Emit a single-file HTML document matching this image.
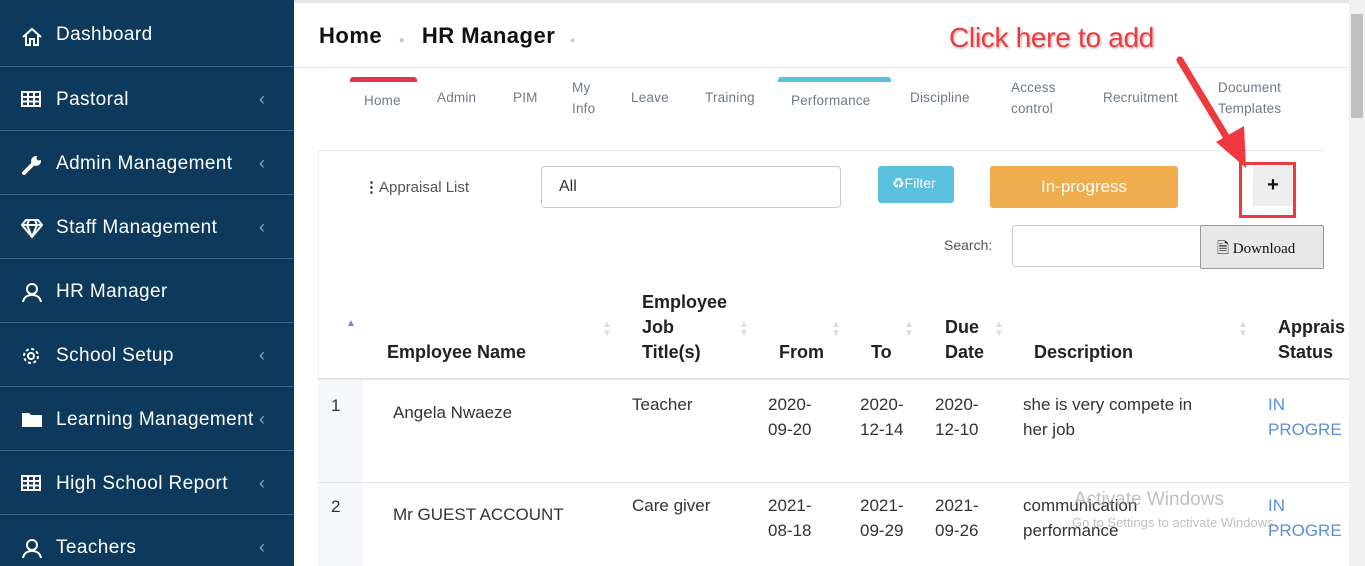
<!DOCTYPE html>
<html><head><meta charset="utf-8"><style>
*{margin:0;padding:0;box-sizing:border-box}
html{width:1365px;height:566px;overflow:hidden}
body{width:1365px;height:566px;overflow:hidden;background:#f4f5f7;font-family:"Liberation Sans",sans-serif;position:relative}
.sb{position:absolute;left:0;top:0;width:294px;height:566px;background:#0d3a5c}
.it{position:absolute;left:0;width:294px;height:64px;border-bottom:1px solid #3f6482;color:#fff;font-size:19px;letter-spacing:0.4px}
.it span{position:absolute;left:56px;top:22px}
.it svg{position:absolute;left:21px;top:23px}
.it i{position:absolute;left:259px;top:22px;font-style:normal;color:#8aa0b3;font-size:18px}
.a{position:absolute;white-space:nowrap}
.hd{position:absolute;left:294px;top:0;width:1055px;height:68px;background:#fff;border-top:3px solid #e6e6e6;border-bottom:1px solid #e8e8e8}
.main{position:absolute;left:294px;top:68px;width:1055px;height:498px;background:#fff}
.tab{position:absolute;font-size:13.5px;color:#707a85;line-height:21px;letter-spacing:0.2px}
.card{position:absolute;left:318px;top:150px;width:1007px;height:416px;background:#fff;border-top:1px solid #eaeaea;border-left:1px solid #f0f0f0}
</style></head><body>
<div class="sb">
<div class="it" style="top:3px"><svg width="22" height="22" viewBox="0 0 22 22" fill="none" stroke="#fff" stroke-width="2"><path d="M2 11L11 3l9 8M5 9v10h4v-6h4v6h4V9"/></svg><span style="top:21px">Dashboard</span></div>
<div class="it" style="top:67px"><svg width="20" height="18" viewBox="0 0 20 18"><rect x="1" y="2" width="18" height="14" fill="none" stroke="#fff" stroke-width="2"/><path d="M1 7h18M1 11.5h18M7 2v14M13 2v14" stroke="#fff" stroke-width="2"/></svg><span>Pastoral</span><i>‹</i></div>
<div class="it" style="top:131px"><svg width="22" height="22" viewBox="0 0 22 22"><path d="M3 19L12 10" stroke="#fff" stroke-width="4" stroke-linecap="round"/><circle cx="15" cy="7" r="5" fill="#fff"/><circle cx="18" cy="4" r="2.5" fill="#0d3a5c"/></svg><span>Admin Management</span><i>‹</i></div>
<div class="it" style="top:195px"><svg width="22" height="20" viewBox="0 0 22 20" fill="none" stroke="#fff" stroke-width="2"><path d="M5 2h12l4 5-10 12L1 7zM1 7h20M8 2l-2 5 5 12 5-12-2-5"/></svg><span>Staff Management</span><i>‹</i></div>
<div class="it" style="top:259px"><svg width="22" height="22" viewBox="0 0 22 22" fill="none" stroke="#fff" stroke-width="2"><circle cx="11" cy="7" r="5"/><path d="M2 20c1-5 4-7 9-7s8 2 9 7"/></svg><span>HR Manager</span></div>
<div class="it" style="top:323px"><svg width="20" height="20" viewBox="0 0 20 20" fill="none" stroke="#fff" stroke-width="2"><circle cx="10" cy="10" r="3"/><circle cx="10" cy="10" r="7" stroke-dasharray="3 2.5"/></svg><span>School Setup</span><i>‹</i></div>
<div class="it" style="top:387px"><svg width="22" height="18" viewBox="0 0 22 18"><path d="M1 3h7l2 2h11v12H1z" fill="#fff"/></svg><span>Learning Management</span><i>‹</i></div>
<div class="it" style="top:451px"><svg width="20" height="18" viewBox="0 0 20 18"><rect x="1" y="2" width="18" height="14" fill="none" stroke="#fff" stroke-width="2"/><path d="M1 7h18M1 11.5h18M7 2v14M13 2v14" stroke="#fff" stroke-width="2"/></svg><span>High School Report</span><i>‹</i></div>
<div class="it" style="top:515px"><svg width="22" height="22" viewBox="0 0 22 22" fill="none" stroke="#fff" stroke-width="2"><circle cx="11" cy="7" r="5"/><path d="M2 20c1-5 4-7 9-7s8 2 9 7"/></svg><span>Teachers</span><i>‹</i></div>
</div>
<div class="hd">
<div class="a" style="left:25px;top:20px;font-size:22px;font-weight:bold;color:#111;letter-spacing:0.5px">Home <span style="color:#ccc;font-size:10px;margin:0 10px">●</span> HR Manager <span style="color:#ccc;font-size:9px;margin-left:8px">●</span></div>
</div>
<div class="main"></div>
<div style="position:absolute;left:1349px;top:0;width:16px;height:566px;background:#f1f1f1"><div style="position:absolute;left:2px;top:14px;width:12px;height:104px;background:#c1c1c1"></div></div>
<div style="position:absolute;left:350px;top:77px;width:67px;height:5px;background:#e0364f;border-radius:3px 3px 0 0"></div>
<div style="position:absolute;left:778px;top:77px;width:113px;height:5px;background:#5bc0de;border-radius:3px 3px 0 0"></div>
<div class="tab" style="left:364px;top:90px">Home</div>
<div class="tab" style="left:437px;top:87px">Admin</div>
<div class="tab" style="left:513px;top:87px">PIM</div>
<div class="tab" style="left:572px;top:77px">My<br>Info</div>
<div class="tab" style="left:631px;top:87px">Leave</div>
<div class="tab" style="left:705px;top:87px">Training</div>
<div class="tab" style="left:791px;top:90px">Performance</div>
<div class="tab" style="left:910px;top:87px">Discipline</div>
<div class="tab" style="left:1011px;top:77px">Access<br>control</div>
<div class="tab" style="left:1103px;top:87px">Recruitment</div>
<div class="tab" style="left:1218px;top:77px">Document<br>Templates</div>
<div class="card"></div>
<div style="position:absolute;left:318px;top:380px;width:45px;height:186px;background:#f7f8fb"></div>
<div class="a" style="left:364px;top:178px;font-size:15px;color:#555"><b style="color:#333">⋮</b>Appraisal List</div>
<div style="position:absolute;left:541px;top:166px;width:300px;height:42px;border:1px solid #ccc;border-radius:4px;font-size:16px;color:#333;padding:11px 17px">All</div>
<div style="position:absolute;left:878px;top:166px;width:76px;height:37px;background:#5bc0de;border-radius:3px;color:#fff;font-size:14px;padding:9px 0 0 14px">♻Filter</div>
<div style="position:absolute;left:990px;top:166px;width:188px;height:42px;background:#f0ad4e;border-radius:3px;color:#fff;font-size:17px;text-align:center;line-height:42px">In-progress</div>
<div style="position:absolute;left:1253px;top:166px;width:40px;height:40px;background:#eee;color:#111;font-size:20px;font-weight:bold;text-align:center;line-height:38px">+</div>
<div style="position:absolute;left:1239px;top:162px;width:57px;height:56px;border:3px solid #f0393f"></div>
<div class="a" style="left:944px;top:237px;font-size:14px;color:#555">Search:</div>
<div style="position:absolute;left:1012px;top:225px;width:190px;height:42px;border:1px solid #ccc;border-radius:3px;background:#fff"></div>
<div style="position:absolute;left:1200px;top:225px;width:124px;height:44px;border:1px solid #999;background:#e8e8e8;border-radius:2px;font-family:'Liberation Serif',serif;font-size:15px;color:#111;padding:12px 0 0 16px">🗎 Download</div>
<svg style="position:absolute;left:940px;top:20px" width="320" height="150"><path d="M240 40L293 128" stroke="#f0393f" stroke-width="7" stroke-linecap="round"/><path d="M276 122L306 148l-2-42z" fill="#f0393f"/></svg>
<div class="a" style="left:949px;top:22px;font-size:28px;color:#f0393f;letter-spacing:-0.3px;text-shadow:0 0 2px #fff,1px 1px 2px #999">Click here to add</div>
<div style="position:absolute;left:318px;top:378px;width:1031px;height:2px;background:#e3e3e3"></div>
<div style="position:absolute;left:318px;top:482px;width:1031px;height:1px;background:#e3e3e3"></div>
<div class="a" style="left:346px;top:318px;color:#7a7ee0;font-size:10px">▲</div>
<div style="font-size:18px;font-weight:bold;color:#222;line-height:25px">
<div class="a" style="left:387px;top:340px">Employee Name</div>
<div class="a" style="left:642px;top:290px">Employee<br>Job<br>Title(s)</div>
<div class="a" style="left:779px;top:340px">From</div>
<div class="a" style="left:871px;top:340px">To</div>
<div class="a" style="left:945px;top:315px">Due<br>Date</div>
<div class="a" style="left:1034px;top:340px">Description</div>
<div class="a" style="left:1278px;top:315px">Apprais<br>Status</div>
</div>
<div style="color:#ddd;font-size:10px;line-height:9px">
<div class="a" style="left:602px;top:320px">▲<br>▼</div><div class="a" style="left:739px;top:320px">▲<br>▼</div><div class="a" style="left:831px;top:320px">▲<br>▼</div><div class="a" style="left:904px;top:320px">▲<br>▼</div><div class="a" style="left:994px;top:320px">▲<br>▼</div><div class="a" style="left:1238px;top:320px">▲<br>▼</div>
</div>
<div style="font-size:17px;color:#333;line-height:25px">
<div class="a" style="left:331px;top:393px">1</div>
<div class="a" style="left:393px;top:400px">Angela Nwaeze</div>
<div class="a" style="left:632px;top:392px">Teacher</div>
<div class="a" style="left:768px;top:392px">2020-<br>09-20</div>
<div class="a" style="left:860px;top:392px">2020-<br>12-14</div>
<div class="a" style="left:935px;top:392px">2020-<br>12-10</div>
<div class="a" style="left:1023px;top:392px">she is very compete in<br>her job</div>
<div class="a" style="left:1268px;top:392px;color:#5b8fd6">IN<br>PROGRE</div>
<div class="a" style="left:331px;top:494px">2</div>
<div class="a" style="left:393px;top:502px">Mr GUEST ACCOUNT</div>
<div class="a" style="left:632px;top:493px">Care giver</div>
<div class="a" style="left:768px;top:493px">2021-<br>08-18</div>
<div class="a" style="left:860px;top:493px">2021-<br>09-29</div>
<div class="a" style="left:935px;top:493px">2021-<br>09-26</div>
<div class="a" style="left:1023px;top:493px">communication<br>performance</div>
<div class="a" style="left:1268px;top:493px;color:#5b8fd6">IN<br>PROGRE</div>
</div>
<div class="a" style="left:1074px;top:489px;font-size:19px;color:rgba(150,150,150,.6)">Activate Windows</div>
<div class="a" style="left:1072px;top:515px;font-size:13px;color:rgba(150,150,150,.6)">Go to Settings to activate Windows.</div>
</body></html>
